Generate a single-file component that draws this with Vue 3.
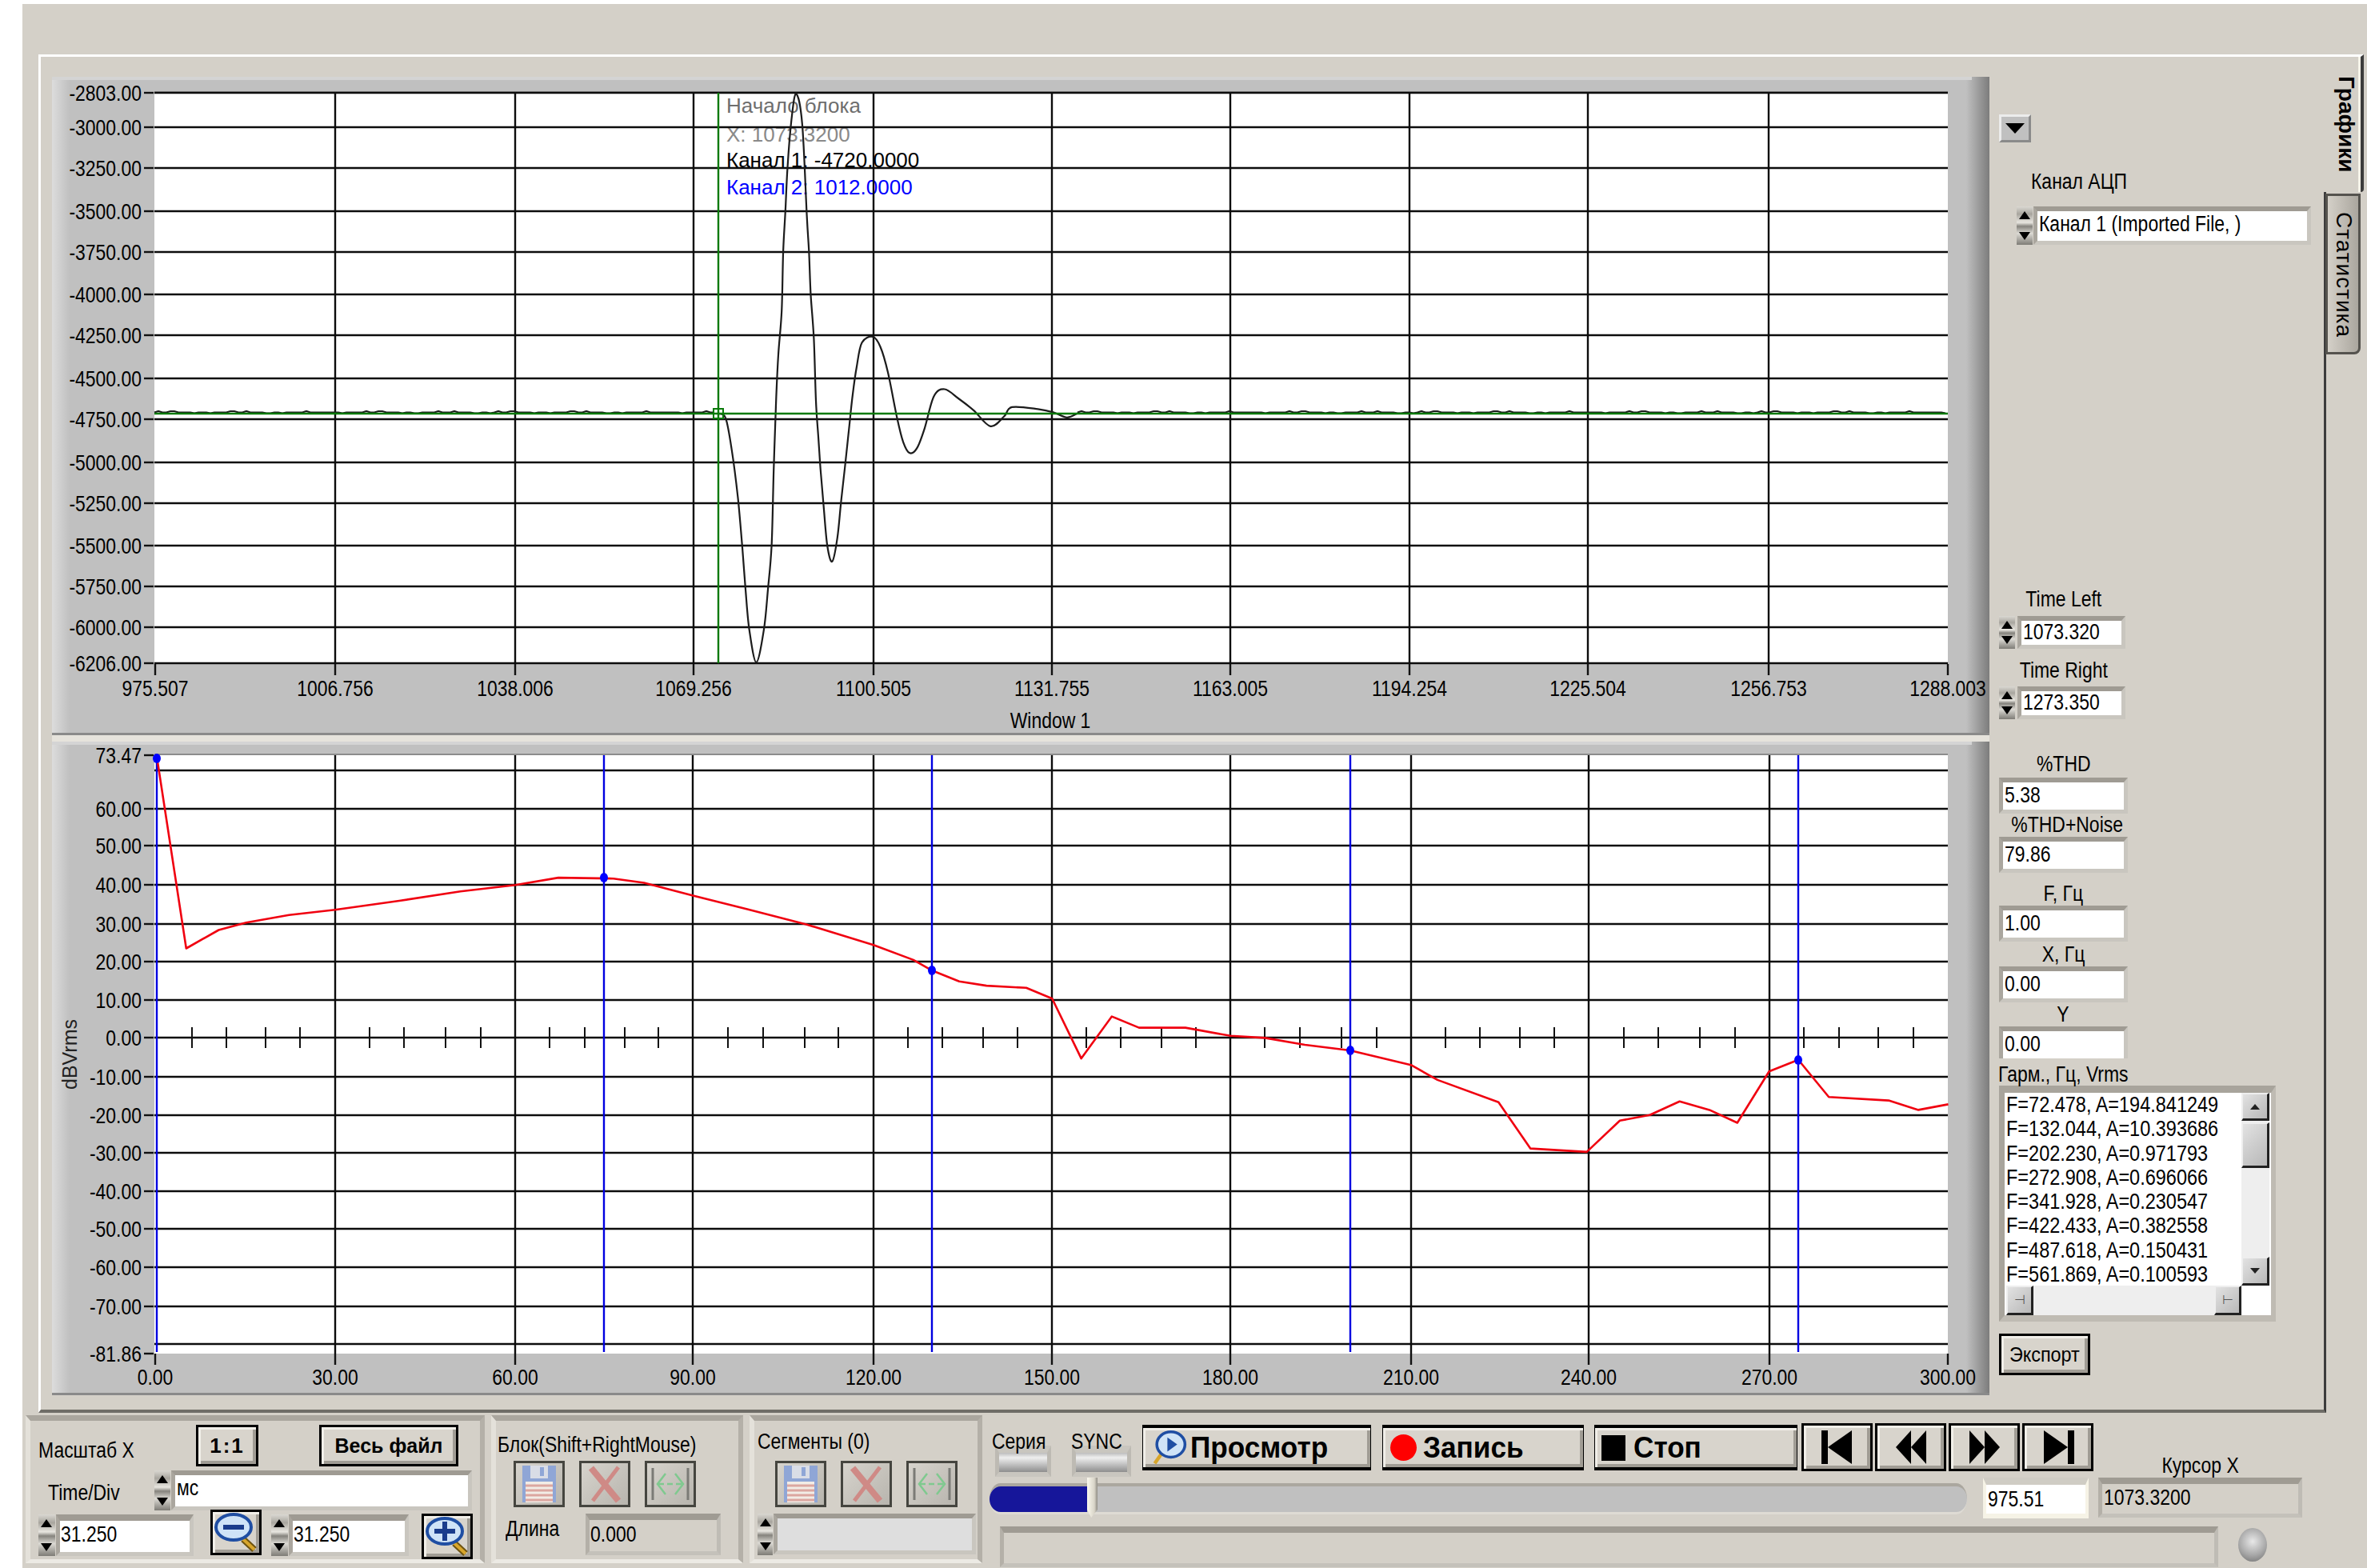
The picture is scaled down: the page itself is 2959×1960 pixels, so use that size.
<template>
  <div class="app">
    <div class="window">
      <div class="tabs-row">
        <div class="tab-panel">
          <div class="plots">
            <!-- time plot -->
            <svg class="plot" width="2422" height="823" viewBox="65 96 2422 823">
              <defs>
                <linearGradient id="edgeL"><stop offset="0" stop-color="#dcdcdc" /><stop offset="1" stop-color="#c0c0c0" /></linearGradient>
                <linearGradient id="edgeR"><stop offset="0" stop-color="#c0c0c0" /><stop offset="1" stop-color="#7c7c7c" /></linearGradient>
              </defs>
              <rect x="65" y="96" width="2422" height="823" fill="#c0c0c0" />
              <rect x="65" y="96" width="22" height="823" fill="url(#edgeL)" />
              <rect x="2458" y="96" width="29" height="823" fill="url(#edgeR)" />
              <rect x="65" y="96" width="2400" height="4" fill="#d4d4d4" />
              <rect x="65" y="916" width="2422" height="3" fill="#8a8a8a" />
              <rect x="193" y="116" width="2242" height="713" fill="#fff" />
              <line x1="193" y1="115" x2="2435" y2="115" class="edge" />

              <g class="note">
                <text x="908" y="141" fill="#6e6e6e">Начало блока</text>
                <text x="908" y="177" fill="#8a8a8a">X: 1073.3200</text>
                <text x="908" y="209" fill="#000">Канал 1: -4720.0000</text>
                <text x="908" y="243" fill="#0000ff">Канал 2: 1012.0000</text>
              </g>

              <line v-for="y in yA" :key="y[0]" x1="193" x2="2435" :y1="y[1]" :y2="y[1]" class="grid" />
              <line v-for="x in xA.slice(1, -1)" :key="x" :x1="x" :x2="x" y1="116" y2="829" class="grid" />
              <polyline :points="flatLeft" class="trace" />
              <path :d="ringPath" class="trace" />
              <polyline :points="flatRight" class="trace" />
              <line x1="193" x2="2435" y1="517" y2="517" class="cursor" />
              <line x1="898" x2="898" y1="116" y2="829" class="cursor" />
              <rect x="892" y="511" width="12" height="12" fill="none" stroke="#0a7a0a" stroke-width="2" />

              <g v-for="y in yA" :key="'a' + y[0]">
                <line x1="180" x2="192" :y1="y[1]" :y2="y[1]" class="tick" />
                <text :transform="tx(177, y[1] + 10)" text-anchor="end" class="lbl">{{ y[0] }}</text>
              </g>
              <g v-for="(x, i) in xA" :key="'b' + x">
                <line :x1="x" :x2="x" y1="830" y2="844" class="tick" />
                <text :transform="tx(x, 870)" text-anchor="middle" class="lbl">{{ xLabelsA[i] }}</text>
              </g>
              <text :transform="tx(1313, 910)" text-anchor="middle" class="lbl">Window 1</text>
            </svg>

            <!-- spectrum plot -->
            <svg class="plot" width="2422" height="817" viewBox="65 927 2422 817">
              <rect x="65" y="927" width="2422" height="817" fill="#c0c0c0" />
              <rect x="65" y="927" width="22" height="817" fill="url(#edgeL)" />
              <rect x="2458" y="927" width="29" height="817" fill="url(#edgeR)" />
              <rect x="65" y="927" width="2400" height="4" fill="#d4d4d4" />
              <rect x="65" y="1741" width="2422" height="3" fill="#8a8a8a" />
              <rect x="193" y="944" width="2242" height="748" fill="#fff" />
              <line x1="193" y1="943" x2="2435" y2="943" class="edge" />

              <line v-for="y in yGridB" :key="y" x1="193" x2="2435" :y1="y" :y2="y" class="grid" />
              <line v-for="x in xB.slice(1, -1)" :key="x" :x1="x" :x2="x" y1="944" y2="1692" class="grid" />
              <line v-for="x in minorB" :key="x" :x1="x" :x2="x" y1="1284" y2="1310" class="minor" />
              <line v-for="m in markers" :key="m[0]" :x1="m[0]" :x2="m[0]" y1="944" y2="1690" class="harm" />
              <polyline :points="traceB" class="red" />
              <ellipse v-for="m in markers" :key="'m' + m[0]" :cx="m[0]" :cy="m[1]" rx="5" ry="6" fill="#0000ff" />

              <g v-for="y in yB" :key="y[0]">
                <line x1="180" x2="192" :y1="y[1]" :y2="y[1]" class="tick" />
                <text :transform="tx(177, y[1] + 10)" text-anchor="end" class="lbl">{{ y[0] }}</text>
              </g>
              <g v-for="(x, i) in xB" :key="'c' + x">
                <line :x1="x" :x2="x" y1="1692" y2="1706" class="tick" />
                <text :transform="tx(x, 1731)" text-anchor="middle" class="lbl">{{ xLabelsB[i] }}</text>
              </g>
              <text transform="translate(96 1318) rotate(-90)" text-anchor="middle" class="lbl small">dBVrms</text>
            </svg>
          </div>

          <div class="side">
            <div class="dd"><span class="dd-arrow"></span></div>
            <div class="lab chan-lab"><span class="t">Канал АЦП</span></div>
            <div class="num-row chan-row">
              <div class="spin"></div>
              <div class="box chan-box"><span class="t">Канал 1 (Imported File, )</span></div>
            </div>

            <div class="lab time-lab"><span class="t c">Time Left</span></div>
            <div class="num-row time-row">
              <div class="spin"></div>
              <div class="box time-box"><span class="t">1073.320</span></div>
            </div>
            <div class="lab time-lab2"><span class="t c">Time Right</span></div>
            <div class="num-row time-row2">
              <div class="spin"></div>
              <div class="box time-box"><span class="t">1273.350</span></div>
            </div>

            <div class="lab r-lab r1"><span class="t c">%THD</span></div>
            <div class="box res res1"><span class="t">5.38</span></div>
            <div class="lab r-lab r2"><span class="t c">%THD+Noise</span></div>
            <div class="box res res2"><span class="t">79.86</span></div>
            <div class="lab r-lab r3"><span class="t c">F, Гц</span></div>
            <div class="box res"><span class="t">1.00</span></div>
            <div class="lab r-lab r4"><span class="t c">X, Гц</span></div>
            <div class="box res"><span class="t">0.00</span></div>
            <div class="lab r-lab"><span class="t c">Y</span></div>
            <div class="box res res-y"><span class="t">0.00</span></div>
            <div class="lab harm-lab"><span class="t">Гарм., Гц, Vrms</span></div>

            <div class="listbox">
              <div class="list-lines">
                <div v-for="l in harmonics" :key="l" class="list-line"><span class="t">{{ l }}</span></div>
              </div>
              <div class="vbar">
                <div class="sb-btn up"><span class="tri-up"></span></div>
                <div class="sb-btn thumb"></div>
                <div class="sb-track"></div>
                <div class="sb-btn down"><span class="tri-down"></span></div>
              </div>
              <div class="hbar">
                <div class="sb-btn side-btn">⊣</div>
                <div class="sb-btn side-btn">⊢</div>
              </div>
            </div>

            <div class="btn export"><span class="t">Экспорт</span></div>
          </div>
        </div>

        <div class="tabstrip">
          <div class="tab tab-on">Графики</div>
          <div class="tab tab-off">Статистика</div>
        </div>
      </div>

      <div class="bottom">
        <!-- X scale -->
        <div class="group g1">
          <div class="g1-row1">
            <div class="lab g-lab1"><span class="t">Масштаб X</span></div>
            <div class="btn b11">1:1</div>
            <div class="btn bfile">Весь файл</div>
          </div>
          <div class="g1-row2">
            <div class="lab g-lab2"><span class="t">Time/Div</span></div>
            <div class="spin"></div>
            <div class="box unit"><span class="t">мс</span></div>
          </div>
          <div class="g1-row3">
            <div class="spin s-low"></div>
            <div class="box zoom-val"><span class="t">31.250</span></div>
            <div class="btn zoom zoom-out">
              <svg viewBox="0 0 58 52"><line x1="38" y1="34" x2="52" y2="47" stroke="#6d5310" stroke-width="8" /><line x1="38" y1="34" x2="52" y2="47" stroke="#d8a62c" stroke-width="4" /><ellipse cx="26" cy="19" rx="22" ry="16" fill="#cfe3f7" stroke="#1f4ea3" stroke-width="4" /><rect x="13" y="16" width="26" height="6" fill="#1a3c8c" /></svg>
            </div>
            <div class="spin s-low s-b"></div>
            <div class="box zoom-val zoom-val2"><span class="t">31.250</span></div>
            <div class="btn zoom zoom-in">
              <svg viewBox="0 0 58 52"><line x1="38" y1="34" x2="52" y2="47" stroke="#6d5310" stroke-width="8" /><line x1="38" y1="34" x2="52" y2="47" stroke="#d8a62c" stroke-width="4" /><ellipse cx="26" cy="19" rx="22" ry="16" fill="#cfe3f7" stroke="#1f4ea3" stroke-width="4" /><rect x="13" y="16" width="26" height="6" fill="#1a3c8c" /><rect x="23" y="7" width="6" height="24" fill="#1a3c8c" /></svg>
            </div>
          </div>
        </div>

        <!-- block -->
        <div class="group g2">
          <div class="lab blk-lab"><span class="t">Блок(Shift+RightMouse)</span></div>
          <div class="tools">
            <div v-for="k in toolKinds" :key="k" class="tool">
              <svg v-if="k === 'save'" viewBox="0 0 58 52"><rect x="8" y="3" width="42" height="46" fill="#8fa6d6" /><rect x="18" y="3" width="22" height="16" fill="#d9dde6" /><rect x="30" y="5" width="5" height="11" fill="#8fa6d6" /><rect x="12" y="23" width="34" height="26" fill="#f2ece6" /><path d="M12 28h34M12 34h34M12 40h34M12 46h34" stroke="#dca6a0" stroke-width="3" /></svg>
              <svg v-else-if="k === 'del'" viewBox="0 0 58 52"><path d="M12 6 L46 47" stroke="#cf8a86" stroke-width="8" /><path d="M46 5 L14 47" stroke="#cf8a86" stroke-width="5" /></svg>
              <svg v-else viewBox="0 0 58 52"><path d="M7 6v40M51 6v40" stroke="#7b7b76" stroke-width="3" /><path d="M14 26h30" stroke="#7fc98f" stroke-width="2.5" stroke-dasharray="7 4" /><path d="M23 13 L13 26 L23 39M35 13 L45 26 L35 39" fill="none" stroke="#7fc98f" stroke-width="2.5" /></svg>
            </div>
          </div>
          <div class="len-row">
            <div class="lab len-lab"><span class="t">Длина</span></div>
            <div class="box gray len-box"><span class="t">0.000</span></div>
          </div>
        </div>

        <!-- segments -->
        <div class="group g3">
          <div class="lab seg-lab"><span class="t">Сегменты (0)</span></div>
          <div class="tools tools3">
            <div v-for="k in toolKinds" :key="k" class="tool">
              <svg v-if="k === 'save'" viewBox="0 0 58 52"><rect x="8" y="3" width="42" height="46" fill="#8fa6d6" /><rect x="18" y="3" width="22" height="16" fill="#d9dde6" /><rect x="30" y="5" width="5" height="11" fill="#8fa6d6" /><rect x="12" y="23" width="34" height="26" fill="#f2ece6" /><path d="M12 28h34M12 34h34M12 40h34M12 46h34" stroke="#dca6a0" stroke-width="3" /></svg>
              <svg v-else-if="k === 'del'" viewBox="0 0 58 52"><path d="M12 6 L46 47" stroke="#cf8a86" stroke-width="8" /><path d="M46 5 L14 47" stroke="#cf8a86" stroke-width="5" /></svg>
              <svg v-else viewBox="0 0 58 52"><path d="M7 6v40M51 6v40" stroke="#7b7b76" stroke-width="3" /><path d="M14 26h30" stroke="#7fc98f" stroke-width="2.5" stroke-dasharray="7 4" /><path d="M23 13 L13 26 L23 39M35 13 L45 26 L35 39" fill="none" stroke="#7fc98f" stroke-width="2.5" /></svg>
            </div>
          </div>
          <div class="seg-row">
            <div class="spin s-low2"></div>
            <div class="box gray2 seg-box"></div>
          </div>
        </div>

        <!-- transport -->
        <div class="transport">
          <div class="row-a">
            <div class="led-col c1">
              <div class="lab led-lab"><span class="t">Серия</span></div>
              <div class="led"></div>
            </div>
            <div class="led-col c2">
              <div class="lab led-lab"><span class="t">SYNC</span></div>
              <div class="led"></div>
            </div>
            <div class="btn big b-view">
              <svg class="view-ico" viewBox="0 0 52 50"><line x1="14" y1="34" x2="5" y2="47" stroke="#d8a62c" stroke-width="5" /><ellipse cx="28" cy="20" rx="20" ry="18" fill="#cfe3f7" stroke="#1f4ea3" stroke-width="4" /><polygon points="23,10 23,30 37,20" fill="#1f4ea3" /></svg>
              <span class="big-t">Просмотр</span>
            </div>
            <div class="btn big b-rec">
              <span class="rec-dot"></span>
              <span class="big-t">Запись</span>
            </div>
            <div class="btn big b-stop">
              <span class="stop-sq"></span>
              <span class="big-t">Стоп</span>
            </div>
            <div class="nav">
              <div class="btn nav-btn"><svg viewBox="0 0 44 44"><rect x="2" y="1" width="8" height="42" /><polygon points="40,1 40,43 10,22" /></svg></div>
              <div class="btn nav-btn"><svg viewBox="0 0 44 44"><polygon points="22,1 22,43 3,22" /><polygon points="41,1 41,43 22,22" /></svg></div>
              <div class="btn nav-btn"><svg viewBox="0 0 44 44"><polygon points="3,1 3,43 22,22" /><polygon points="22,1 22,43 41,22" /></svg></div>
              <div class="btn nav-btn"><svg viewBox="0 0 44 44"><polygon points="4,1 4,43 34,22" /><rect x="34" y="1" width="8" height="42" /></svg></div>
            </div>
            <div class="lab cur-lab"><span class="t c">Курсор X</span></div>
          </div>
          <div class="row-b">
            <div class="slider">
              <div class="slider-fill"></div>
              <div class="slider-thumb"></div>
            </div>
            <div class="box pos-box"><span class="t">975.51</span></div>
            <div class="box gray cur-box"><span class="t">1073.3200</span></div>
          </div>
          <div class="row-c">
            <div class="box gray status"></div>
            <div class="knob"></div>
          </div>
        </div>
      </div>
    </div>
  </div>
</template>

<script setup>
const tx = (x, y) => `translate(${x} ${y}) scale(.85 1)`

const yA = [
  ['-2803.00', 116], ['-3000.00', 159], ['-3250.00', 210], ['-3500.00', 264],
  ['-3750.00', 315], ['-4000.00', 368], ['-4250.00', 419], ['-4500.00', 473],
  ['-4750.00', 524], ['-5000.00', 578], ['-5250.00', 629], ['-5500.00', 682],
  ['-5750.00', 733], ['-6000.00', 784], ['-6206.00', 829]
]
const xA = [194, 419, 644, 867, 1092, 1315, 1538, 1762, 1985, 2211, 2435]
const xLabelsA = ['975.507', '1006.756', '1038.006', '1069.256', '1100.505', '1131.755', '1163.005', '1194.254', '1225.504', '1256.753', '1288.003']

const yB = [
  ['73.47', 944], ['60.00', 1011], ['50.00', 1057], ['40.00', 1106], ['30.00', 1155],
  ['20.00', 1202], ['10.00', 1250], ['0.00', 1297], ['-10.00', 1346], ['-20.00', 1394],
  ['-30.00', 1441], ['-40.00', 1489], ['-50.00', 1536], ['-60.00', 1584], ['-70.00', 1633],
  ['-81.86', 1692]
]
const yGridB = [963, 1011, 1057, 1106, 1155, 1202, 1250, 1297, 1346, 1394, 1441, 1489, 1536, 1584, 1633, 1680]
const xB = [194, 419, 644, 866, 1092, 1315, 1538, 1764, 1986, 2212, 2435]
const xLabelsB = ['0.00', '30.00', '60.00', '90.00', '120.00', '150.00', '180.00', '210.00', '240.00', '270.00', '300.00']
const minorB = [240, 283, 332, 375, 462, 505, 557, 601, 687, 731, 781, 823, 910, 954, 1006, 1048, 1135, 1178, 1229, 1272, 1358, 1401, 1452, 1495, 1581, 1625, 1677, 1721, 1807, 1850, 1900, 1943, 2030, 2073, 2125, 2169, 2255, 2299, 2348, 2392]
const markers = [[196, 948], [755, 1097], [1165, 1213], [1688, 1313], [2248, 1325]]

const toPoints = (pts) => pts.map((p) => p.map((v) => v.toFixed(1)).join(',')).join(' ')

// flat part of the signal, a bit of noise around the cursor line
const flat = (from, to) => {
  const pts = []
  for (let x = from, i = 0; x < to; x += 5, i++) {
    const n = Math.sin(i * 1.7) + Math.sin(i * 0.37)
    pts.push([x, 515.5 + (n > 1.2 ? -1.5 : n < -1.2 ? 1 : 0)])
  }
  return pts
}
const flatLeft = toPoints(flat(193, 898))
const flatRight = toPoints(flat(1347, 2435))

// read off the reference: ring-down after the block start
const ringdown = [
  [255, 858], [280, 870], [300, 950], [320, 1070], [335, 1200], [345, 1300], [357, 1400], [380, 1483],
  [405, 1400], [418, 1300], [430, 1190], [437, 1000], [445, 820], [452, 710], [463, 600], [468, 450],
  [475, 350], [482, 240], [495, 120], [510, 55], [530, 130], [545, 360], [552, 450], [558, 560],
  [568, 670], [575, 830], [583, 920], [590, 1000], [600, 1090], [612, 1190], [628, 1230], [645, 1170],
  [657, 1080], [670, 990], [685, 880], [695, 810], [708, 740], [725, 680], [760, 665], [785, 690],
  [810, 755], [840, 870], [860, 930], [880, 957], [905, 945], [930, 895], [960, 815], [995, 797],
  [1040, 820], [1090, 850], [1145, 890], [1190, 865], [1215, 842], [1300, 847], [1350, 855], [1395, 868],
  [1430, 857]
].map(([x, y]) => [800 + x / 2.613, 90 + y / 2.01])

// catmull-rom through the samples so the curve is not faceted
const smooth = (p) => {
  let d = `M${p[0][0].toFixed(1)} ${p[0][1].toFixed(1)}`
  for (let i = 0; i < p.length - 1; i++) {
    const a = p[i - 1] || p[i]
    const b = p[i]
    const c = p[i + 1]
    const e = p[i + 2] || c
    const c1 = [b[0] + (c[0] - a[0]) / 6, b[1] + (c[1] - a[1]) / 6]
    const c2 = [c[0] - (e[0] - b[0]) / 6, c[1] - (e[1] - b[1]) / 6]
    d += ` C${c1[0].toFixed(1)} ${c1[1].toFixed(1)} ${c2[0].toFixed(1)} ${c2[1].toFixed(1)} ${c[0].toFixed(1)} ${c[1].toFixed(1)}`
  }
  return d
}
const ringPath = smooth(ringdown)

const spectrumL = [
  [205, 95], [252, 533], [305, 490], [350, 473], [420, 455], [495, 443], [600, 422], [700, 400], [790, 385],
  [860, 368], [950, 370], [1000, 380], [1080, 410], [1170, 442], [1265, 477], [1375, 525], [1440, 560],
  [1471, 585], [1515, 610]
].map(([x, y]) => [40 + x / 1.307, 900 + y / 1.867])
const spectrumR = [
  [40, 620], [100, 625], [139, 650], [183, 790], [229, 692], [270, 718], [340, 718], [408, 737], [460, 742],
  [520, 758], [588, 771], [680, 805], [720, 840], [812, 892], [860, 1000], [945, 1008], [995, 935], [1040, 922],
  [1085, 890], [1130, 910], [1172, 940], [1220, 820], [1264, 793], [1310, 880], [1400, 888], [1445, 910], [1490, 897]
].map(([x, y]) => [1200 + x / 1.206, 900 + y / 1.867])
const traceB = toPoints([...spectrumL, ...spectrumR])

const harmonics = [
  'F=72.478, A=194.841249',
  'F=132.044, A=10.393686',
  'F=202.230, A=0.971793',
  'F=272.908, A=0.696066',
  'F=341.928, A=0.230547',
  'F=422.433, A=0.382558',
  'F=487.618, A=0.150431',
  'F=561.869, A=0.100593'
]

const toolKinds = ['save', 'del', 'range']
</script>

<style>
html, body {
  margin: 0;
  background: #fff;
}
</style>

<style scoped>
.app {
  width: 2959px;
  height: 1960px;
  padding: 5px 0 0 28px;
  box-sizing: border-box;
  overflow: hidden;
  background: #fff;
  font: 27px/30px "Liberation Sans", Arial, sans-serif;
  color: #000;
}

.window {
  width: 2931px;
  height: 1955px;
  padding-top: 63px;
  box-sizing: border-box;
  background: #d4d0c8;
}

.tabs-row {
  display: flex;
  height: 1698px;
  padding-left: 20px;
}

.tab-panel {
  display: flex;
  width: 2860px;
  box-sizing: border-box;
  padding: 25px 0 0 14px;
  border-top: 3px solid #fff;
  border-left: 3px solid #fff;
  border-right: 3px solid #3c3c3c;
  border-bottom: 4px solid #6f6d67;
}

.plots {
  display: flex;
  flex-direction: column;
  gap: 8px;
  width: 2422px;
  height: 1648px;
  background: #e6e3dc;
}

.plot {
  display: block;
}

.edge { stroke: #8c8c8c; stroke-width: 2; }
.grid { stroke: #0c0c0c; stroke-width: 2.4; }
.tick { stroke: #111; stroke-width: 2.4; }
.minor { stroke: #111; stroke-width: 2; }
.cursor { stroke: #0a7a0a; stroke-width: 2.4; }
.harm { stroke: #0000e0; stroke-width: 2.4; }
.trace { fill: none; stroke: #1c1c1c; stroke-width: 2.2; }
.red { fill: none; stroke: #f00010; stroke-width: 2.6; stroke-linejoin: round; }

.lbl {
  font: 27px "Liberation Sans", Arial, sans-serif;
  fill: #000;
}

.small {
  font-size: 25px;
  fill: #222;
}

.note text {
  font: 26px "Liberation Sans", Arial, sans-serif;
}

/* narrow text of the panel */
.t {
  display: inline-block;
  white-space: nowrap;
  transform: scaleX(.85);
  transform-origin: left center;
}

.t.c {
  transform-origin: center;
}

/* right column */
.side {
  width: 418px;
  box-sizing: border-box;
  padding: 47px 0 0 12px;
}

.lab {
  height: 30px;
  white-space: nowrap;
}

.dd {
  display: flex;
  align-items: center;
  justify-content: center;
  width: 40px;
  height: 35px;
  box-sizing: border-box;
  background: #c0c0c0;
  border: 3px solid;
  border-color: #ececec #8a8a8a #8a8a8a #ececec;
}

.dd-arrow {
  border-left: 12px solid transparent;
  border-right: 12px solid transparent;
  border-top: 13px solid #000;
}

.chan-lab { margin: 34px 0 0 40px; }

.num-row {
  display: flex;
}

.chan-row { margin: 16px 0 0 22px; height: 48px; }

.spin {
  position: relative;
  flex: none;
  width: 20px;
  margin-right: 1px;
  background: linear-gradient(#dad8d2, #a8a59e 20%, #e8e6e0 42%, #85837d 52%, #dcdad4 70%, #7e7c76 100%);
}

.spin::before,
.spin::after {
  content: "";
  position: absolute;
  left: 3px;
  border-left: 7px solid transparent;
  border-right: 7px solid transparent;
}

.spin::before {
  top: 6px;
  border-bottom: 10px solid #000;
}

.spin::after {
  bottom: 6px;
  border-top: 10px solid #000;
}

.box {
  box-sizing: border-box;
  background: #fff;
  border-style: solid;
  border-width: 6px 5px 5px 5px;
  border-color: #9f9b93 #c9c6bf #c9c6bf #aaa69e;
  padding-left: 2px;
  line-height: 32px;
  white-space: nowrap;
  overflow: hidden;
}

.gray { background: #d4d0c8; border-top-width: 8px; border-color: #9f9b93 #bfbcb5 #c4c1ba #b4b0a8; }
.gray2 { background: #dedede; }

.chan-box { width: 347px; }

.time-lab { margin: 428px 0 0 0; width: 161px; text-align: center; }
.time-lab2 { margin: 12px 0 0 0; width: 161px; text-align: center; }
.time-row { margin-top: 6px; height: 41px; }
.time-row2 { margin-top: 5px; height: 41px; }
.time-box { width: 135px; margin-left: 2px; line-height: 29px; }

.r-lab { width: 161px; text-align: center; }
.r1 { margin-top: 41px; }
.r2 { margin-top: 0; height: 28px; line-height: 28px; width: 170px; }
.r3 { margin-top: 11px; }
.r4 { margin-top: 1px; }

.res { width: 161px; height: 45px; }
.res1 { margin-top: 2px; }
.res2 { margin-top: 1px; }
.res-y { height: 40px; border-bottom: 0; }

.harm-lab { margin-top: 5px; margin-left: -1px; }

.listbox {
  display: grid;
  grid-template-columns: 294px 35px;
  grid-template-rows: 241px 37px;
  width: 346px;
  height: 295px;
  margin-top: -1px;
  padding: 0 4px 0 2px;
  box-sizing: border-box;
  background: #fff;
  border-style: solid;
  border-width: 9px 6px 8px 7px;
  border-color: #a8a49c #bfbbb3 #bfbbb3 #a8a49c;
}

.list-lines {
  overflow: hidden;
}

.list-line {
  height: 30.3px;
  line-height: 30px;
}

.list-line .t {
  transform: scaleX(.87);
}

.vbar {
  display: flex;
  flex-direction: column;
  background: #eee;
}

.hbar {
  grid-column: 1;
  display: flex;
  justify-content: space-between;
  background: #eee;
}

.sb-btn {
  display: flex;
  align-items: center;
  justify-content: center;
  box-sizing: border-box;
  background: linear-gradient(135deg, #e2e2e2, #b8b8b8);
  border-right: 3px solid #222;
  border-bottom: 3px solid #222;
  border-top: 2px solid #eee;
  border-left: 2px solid #eee;
}

.up { height: 35px; }
.thumb { height: 57px; margin-top: 2px; }
.sb-track { flex: 1; }
.down { height: 36px; }

.tri-up {
  border-left: 6px solid transparent;
  border-right: 6px solid transparent;
  border-bottom: 7px solid #222;
}

.tri-down {
  border-left: 6px solid transparent;
  border-right: 6px solid transparent;
  border-top: 7px solid #222;
}

.side-btn {
  width: 34px;
  font-size: 16px;
  line-height: 16px;
  color: #555;
}

.btn {
  display: flex;
  align-items: center;
  justify-content: center;
  box-sizing: border-box;
  background: #d8d4cc;
  border: 3px solid #000;
  box-shadow: inset 3px 3px 0 #f1efe9, inset -4px -4px 0 #a09c94;
  white-space: nowrap;
}

.export {
  width: 114px;
  height: 52px;
  margin-top: 15px;
}

.export .t {
  transform: scaleX(.9);
  transform-origin: center;
  font-size: 26px;
}

/* tabs */
.tabstrip {
  position: relative;
  width: 50px;
  margin-left: -3px;
  z-index: 1;
}

.tab {
  writing-mode: vertical-rl;
  font-size: 28px;
  line-height: 36px;
  white-space: nowrap;
  box-sizing: border-box;
}

.tab-on {
  width: 50px;
  height: 172px;
  padding: 24px 0 0 5px;
  background: #d4d0c8;
  font-weight: 700;
  border-top: 3px solid #fff;
  border-right: 4px solid #3c3c3c;
  box-shadow: inset -3px 0 0 #f4f2e8;
  border-bottom-right-radius: 4px;
}

.tab-off {
  width: 44px;
  height: 201px;
  margin: 2px 0 0 2px;
  padding: 20px 0 0 3px;
  background: linear-gradient(90deg, #d4d0c8, #aaa69e);
  border: 3px solid #55534e;
  border-radius: 0 0 8px 0;
  letter-spacing: 1px;
}

/* bottom */
.bottom {
  display: flex;
  height: 185px;
  margin: 3px 0 0 4px;
}

.group {
  flex: none;
  height: 185px;
  box-sizing: border-box;
  border-style: solid;
  border-width: 7px 6px 5px 6px;
  border-color: #aaa69e #b4b0a8 #eceae4 #e4e1da;
}

.g1 { width: 574px; }
.g2 { width: 315px; margin-left: 8px; }
.g3 { width: 291px; margin-left: 8px; }

.g1-row1 {
  display: flex;
  height: 52px;
  margin-top: 5px;
}

.g-lab1 { width: 207px; padding: 17px 0 0 10px; box-sizing: border-box; height: 52px; }
.b11 { width: 78px; height: 52px; font-weight: 700; letter-spacing: 2px; font-size: 26px; }
.bfile { width: 174px; height: 52px; margin-left: 76px; font-weight: 700; font-size: 25px; }

.g1-row2 {
  display: flex;
  height: 50px;
  margin-top: 5px;
}

.g-lab2 { width: 155px; padding: 13px 0 0 22px; box-sizing: border-box; height: 50px; }

.unit { width: 376px; height: 50px; }

.g1-row3 {
  display: flex;
  height: 62px;
  margin: -1px 0 0 10px;
}

.s-low { height: 52px; margin-top: 6px; width: 21px; margin-right: 1px; }
.s-b { margin-left: 12px; }

.zoom-val { width: 172px; height: 52px; margin-top: 6px; padding-left: 1px; border-top-width: 8px; line-height: 34px; }
.zoom-val2 { width: 150px; }

.zoom { width: 64px; height: 57px; padding: 0; }
.zoom svg { width: 58px; height: 52px; }
.zoom-out { margin-left: 21px; }
.zoom-in { margin: 5px 0 0 16px; }

.blk-lab { margin: 15px 0 0 2px; }
.seg-lab { margin: 11px 0 0 4px; }

.tools {
  display: flex;
  margin: 5px 0 0 22px;
  gap: 18px;
}

.tools3 {
  margin: 9px 0 0 26px;
}

.tool {
  width: 64px;
  height: 58px;
  box-sizing: border-box;
  border: 3px solid #45453f;
  background: linear-gradient(135deg, #d6d3cc, #b8b5ae);
}

.tool svg {
  display: block;
  width: 58px;
  height: 52px;
}

.len-row {
  display: flex;
  margin-top: 8px;
}

.len-lab { width: 112px; padding: 4px 0 0 12px; box-sizing: border-box; height: 52px; }
.len-box { width: 169px; height: 52px; padding-left: 1px; line-height: 36px; }

.seg-row {
  display: flex;
  margin: 8px 0 0 4px;
}

.s-low2 { height: 52px; width: 19px; margin-right: 1px; }
.seg-box { width: 253px; height: 51px; }

.transport {
  flex: none;
  width: 1660px;
  margin-left: 9px;
  padding-top: 10px;
}

.row-a {
  display: flex;
  height: 68px;
}

.led-col { flex: none; height: 68px; }
.c1 { width: 74px; margin-left: 3px; }
.c2 { width: 75px; margin-left: 25px; }

.led-lab { height: 20px; margin-top: 13px; line-height: 20px; }

.led {
  width: 70px;
  height: 39px;
  margin: -5px 0 0 4px;
  box-sizing: border-box;
  border-style: solid;
  border-width: 9px 5px 6px 5px;
  border-color: #c9c6bf #bdbab3 #c9c6bf #bdbab3;
  background: linear-gradient(#bcbcbc, #efefef 25%, #8e8e8e);
}

.c2 .led { margin-left: 1px; width: 74px; }

.big {
  justify-content: flex-start;
  height: 57px;
  margin-top: 2px;
  border-width: 4px 1px 4px 1px;
}

.b-view { width: 286px; margin-left: 14px; padding-left: 10px; }
.b-rec { width: 252px; margin-left: 14px; padding-left: 9px; }
.b-stop { width: 254px; margin-left: 13px; padding-left: 8px; }

.view-ico { width: 46px; height: 44px; flex: none; }

.big-t {
  margin-left: 3px;
  font-size: 37px;
  font-weight: 700;
  transform: scaleX(.95);
  transform-origin: left center;
}

.rec-dot {
  flex: none;
  width: 33px;
  height: 33px;
  margin-right: 5px;
  border-radius: 50%;
  background: #ff0000;
}

.stop-sq {
  flex: none;
  width: 30px;
  height: 32px;
  margin-right: 7px;
  background: #000;
}

.nav {
  display: flex;
  gap: 3px;
  margin-left: 5px;
}

.nav-btn {
  width: 89px;
  height: 60px;
}

.nav-btn svg {
  width: 44px;
  height: 44px;
}

.cur-lab {
  flex: none;
  width: 255px;
  margin: 38px 0 0 6px;
  text-align: center;
}

.row-b {
  display: flex;
  height: 51px;
}

.slider {
  position: relative;
  width: 1222px;
  height: 39px;
  margin-top: 7px;
  box-sizing: border-box;
  background: #c0c0c0;
  border-radius: 14px / 20px;
  border-top: 4px solid #aba79f;
  border-bottom: 3px solid #dedbd4;
}

.slider-fill {
  width: 122px;
  height: 100%;
  background: #16169a;
  border-radius: 14px 0 0 14px / 16px 0 0 16px;
}

.slider-thumb {
  position: absolute;
  left: 122px;
  top: -11px;
  width: 13px;
  height: 50px;
  background: linear-gradient(90deg, #fbf9ee, #d8d4c8 70%, #8f8c84);
  clip-path: polygon(0 0, 100% 0, 100% 80%, 40% 100%, 0 80%);
}

.pos-box {
  width: 132px;
  height: 51px;
  margin-left: 20px;
  border-color: #cfccc4 #f6f3e6 #f6f3e6 #f6f3e6;
  border-width: 9px 4px 6px 4px;
  line-height: 36px;
}

.cur-box {
  width: 255px;
  height: 50px;
  margin-left: 12px;
  line-height: 34px;
}

.row-c {
  display: flex;
  margin-top: 10px;
}

.status {
  width: 1523px;
  height: 51px;
  margin-left: 13px;
}

.knob {
  width: 36px;
  height: 42px;
  margin: 2px 0 0 25px;
  border-radius: 50%;
  background: radial-gradient(circle at 50% 40%, #e8e8e8, #a8a8a8 55%, #6c6c6c);
}
</style>
